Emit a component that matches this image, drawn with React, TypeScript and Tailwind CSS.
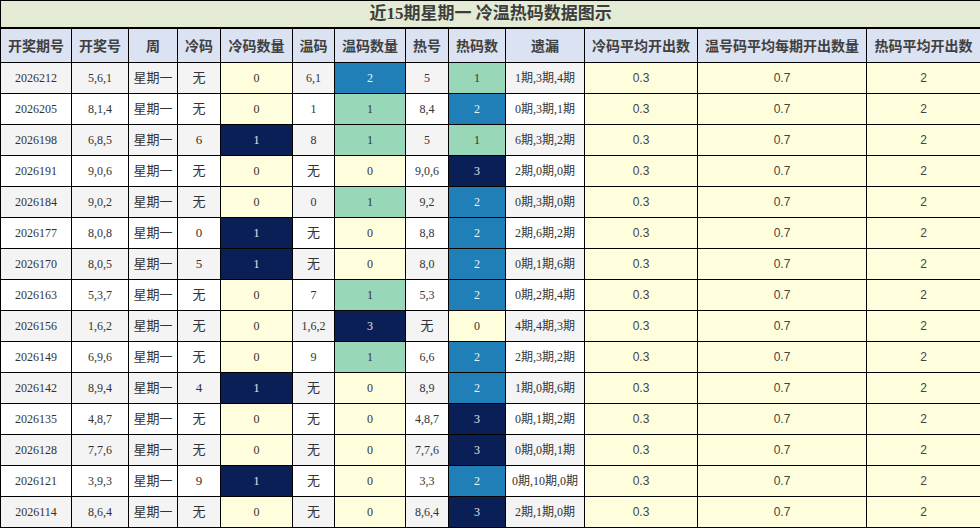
import React from "react";

type Row = [string, string, string, string, string, string, string, string];

const rows: Row[] = [
  ["2026212", "5,6,1", "无", "0", "6,1", "2", "5", "1", "1期,3期,4期"] as any,
  ["2026205", "8,1,4", "无", "0", "1", "1", "8,4", "2", "0期,3期,1期"] as any,
  ["2026198", "6,8,5", "6", "1", "8", "1", "5", "1", "6期,3期,2期"] as any,
  ["2026191", "9,0,6", "无", "0", "无", "0", "9,0,6", "3", "2期,0期,0期"] as any,
  ["2026184", "9,0,2", "无", "0", "0", "1", "9,2", "2", "0期,3期,0期"] as any,
  ["2026177", "8,0,8", "0", "1", "无", "0", "8,8", "2", "2期,6期,2期"] as any,
  ["2026170", "8,0,5", "5", "1", "无", "0", "8,0", "2", "0期,1期,6期"] as any,
  ["2026163", "5,3,7", "无", "0", "7", "1", "5,3", "2", "0期,2期,4期"] as any,
  ["2026156", "1,6,2", "无", "0", "1,6,2", "3", "无", "0", "4期,4期,3期"] as any,
  ["2026149", "6,9,6", "无", "0", "9", "1", "6,6", "2", "2期,3期,2期"] as any,
  ["2026142", "8,9,4", "4", "1", "无", "0", "8,9", "2", "1期,0期,6期"] as any,
  ["2026135", "4,8,7", "无", "0", "无", "0", "4,8,7", "3", "0期,1期,2期"] as any,
  ["2026128", "7,7,6", "无", "0", "无", "0", "7,7,6", "3", "0期,0期,1期"] as any,
  ["2026121", "3,9,3", "9", "1", "无", "0", "3,3", "2", "0期,10期,0期"] as any,
  ["2026114", "8,6,4", "无", "0", "无", "0", "8,6,4", "3", "2期,1期,0期"] as any,
];

const widths = [71, 57, 49, 43, 72, 42, 71, 43, 57, 79, 113, 169, 114];

const headers = [
  "开奖期号",
  "开奖号",
  "周",
  "冷码",
  "冷码数量",
  "温码",
  "温码数量",
  "热号",
  "热码数",
  "遗漏",
  "冷码平均开出数",
  "温号码平均每期开出数量",
  "热码平均开出数",
];

function countClass(v: string): string {
  switch (v) {
    case "1":
      return "bg-[#98d8b9] text-[#333]";
    case "2":
      return "bg-[#1f7fb6] text-[#f2f2f2]";
    case "3":
      return "bg-[#0b1f57] text-[#e6e6e6]";
    default:
      return "bg-[#fefedd] text-[#333]";
  }
}

function coldClass(v: string): string {
  return v === "1" ? "bg-[#0b1f57] text-[#e6e6e6]" : "bg-[#fefedd] text-[#333]";
}

const serif = "font-['Liberation_Serif','Noto_Sans_CJK_SC',serif]";

export default function App() {
  return (
    <div className="w-[980px] h-[528px] bg-white overflow-hidden">
      <table className="w-[980px] border-collapse table-fixed">
        <colgroup>
          {widths.map((w, i) => (
            <col key={i} style={{ width: w }} />
          ))}
        </colgroup>
        <thead>
          <tr className="h-[27px]">
            <th
              colSpan={13}
              className={`border border-black border-b-2 bg-[#e3ebd4] text-[#3d3d3d] text-[17px] font-bold leading-none p-0 ${serif}`}
            >
              近15期星期一 冷温热码数据图示
            </th>
          </tr>
          <tr className="h-[35px]">
            {headers.map((h, i) => (
              <th
                key={i}
                className="border border-black bg-[#dbe2f1] text-[#404040] text-[14px] font-bold p-0 whitespace-nowrap font-['Noto_Sans_CJK_SC',sans-serif]"
              >
                {h}
              </th>
            ))}
          </tr>
        </thead>
        <tbody>
          {rows.map((r: any, i) => {
            const base = i % 2 === 0 ? "bg-[#f4f4f4]" : "bg-white";
            const td = `border border-black p-0 text-center text-[12px] text-[#333] whitespace-nowrap ${serif}`;
            return (
              <tr key={i} className="h-[31px]">
                <td className={`${td} ${base}`}>{r[0]}</td>
                <td className={`${td} ${base}`}>{r[1]}</td>
                <td className={`${td} ${base} text-[13px]`}>星期一</td>
                <td className={`${td} ${base} text-[13px]`}>{r[2]}</td>
                <td className={`${td} ${coldClass(r[3])}`}>{r[3]}</td>
                <td className={`${td} ${base} ${r[4] === "无" ? "text-[13px]" : ""}`}>{r[4]}</td>
                <td className={`${td} ${countClass(r[5])}`}>{r[5]}</td>
                <td className={`${td} ${base} ${r[6] === "无" ? "text-[13px]" : ""}`}>{r[6]}</td>
                <td className={`${td} ${countClass(r[7])}`}>{r[7]}</td>
                <td className={`${td} ${base}`}>{r[8]}</td>
                <td className="border border-black p-0 text-center text-[12px] text-[#444] bg-[#fefedd] font-['Liberation_Sans',sans-serif]">
                  0.3
                </td>
                <td className="border border-black p-0 text-center text-[12px] text-[#444] bg-[#fefedd] font-['Liberation_Sans',sans-serif]">
                  0.7
                </td>
                <td className="border border-black p-0 text-center text-[12px] text-[#444] bg-[#fefedd] font-['Liberation_Sans',sans-serif]">
                  2
                </td>
              </tr>
            );
          })}
        </tbody>
      </table>
    </div>
  );
}
